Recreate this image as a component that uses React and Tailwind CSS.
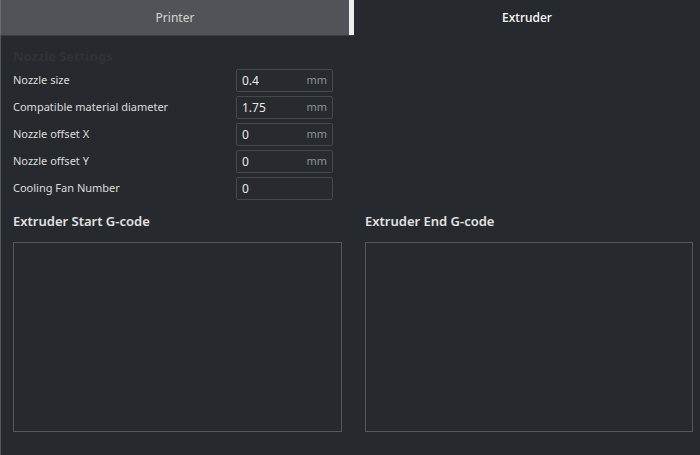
import React from "react";

const fields = [
  { label: "Nozzle size", value: "0.4", unit: "mm" },
  { label: "Compatible material diameter", value: "1.75", unit: "mm" },
  { label: "Nozzle offset X", value: "0", unit: "mm" },
  { label: "Nozzle offset Y", value: "0", unit: "mm" },
  { label: "Cooling Fan Number", value: "0", unit: "" },
];

function Field({ label, value, unit }) {
  return (
    <div className="flex items-center h-[27px]">
      <div className="w-[223px] text-[11px] text-[#dcdcdc]">{label}</div>
      <div className="flex items-center justify-between w-[97px] h-[23px] border border-[#45494e] bg-[#272b2f] rounded-[2px] px-[5px]">
        <span className="text-[12px] text-[#eaeaea]">{value}</span>
        <span className="text-[11px] text-[#8e9398]">{unit}</span>
      </div>
    </div>
  );
}

export default function App() {
  return (
    <div
      className="w-[700px] h-[455px] bg-[#262a2e] flex flex-col overflow-hidden"
      style={{ fontFamily: '"Noto Sans", "Open Sans", sans-serif' }}
    >
      {/* tabs */}
      <div className="flex h-[36px]">
        <div className="w-[349px] bg-[#505458] border-l border-[#6a6e72] border-b border-b-[#3a3e42] flex items-center justify-center text-[12px] text-[#d4d4d4]">
          Printer
        </div>
        <div className="w-[5px] bg-[#eeeeee] border-b border-b-[#3a3e42]"></div>
        <div className="flex-1 flex items-center justify-center text-[12px] text-white font-medium">
          Extruder
        </div>
      </div>

      {/* body */}
      <div className="flex-1 border-l border-[#54585c] pl-[12px] pt-[10px]">
        <div className="text-[13px] font-bold text-[#2f3337] h-[21px] leading-[21px]">
          Nozzle Settings
        </div>
        <div className="flex flex-col">
          {fields.map((f) => (
            <Field key={f.label} {...f} />
          ))}
        </div>

        <div className="flex gap-[23px] mt-[9px]">
          <div className="flex flex-col">
            <div className="text-[13px] font-semibold text-[#e2e2e2] h-[20px] leading-[20px]">
              Extruder Start G-code
            </div>
            <div className="mt-[11px] w-[329px] h-[190px] border border-[#55595d]"></div>
          </div>
          <div className="flex flex-col">
            <div className="text-[13px] font-semibold text-[#e2e2e2] h-[20px] leading-[20px]">
              Extruder End G-code
            </div>
            <div className="mt-[11px] w-[328px] h-[190px] border border-[#55595d]"></div>
          </div>
        </div>
      </div>
    </div>
  );
}
